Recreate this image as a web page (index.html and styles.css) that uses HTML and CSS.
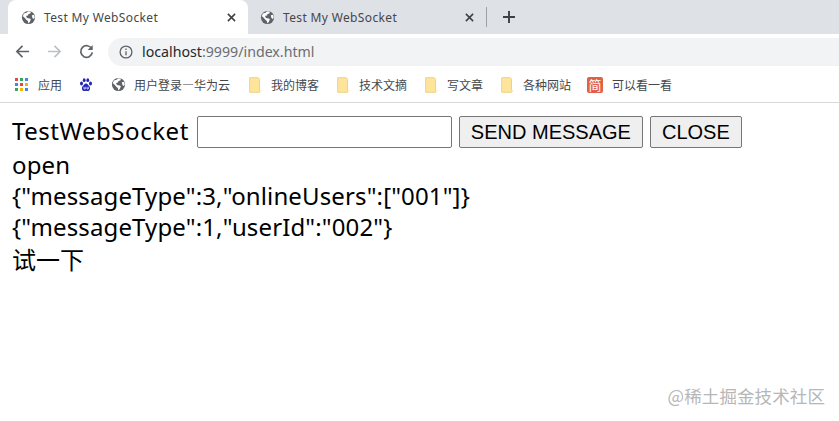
FILE: index.html
```html
<!DOCTYPE html>
<html lang="zh">
<head>
<meta charset="utf-8">
<title>Test My WebSocket</title>
<link rel="stylesheet" href="styles.css">
</head>
<body>
<svg class="defs" width="0" height="0" aria-hidden="true">
  <symbol id="globe" viewBox="0 0 16 16">
    <circle cx="8" cy="8" r="7" fill="#5f6368"/>
    <path d="M3 3.6 6 3l1.6-1.6 3 .4-.6 1.800-2 .6-.5 1.600-1.600.3-.4 1.400 1.600 1.200 2.500.3.9 1.200-1.200 2.500-1.400 1.600-.6-2.700-1.600-1.200L3.600 8 2 6.600z" fill="#fff"/>
    <path d="M11.500 5.600 14 5l.6 3-1.200 1.600-1.200-1.200z" fill="#fff"/>
  </symbol>
  <symbol id="folder" viewBox="0 0 12 16">
    <path d="M.7.7h8c1 0 1.800.8 1.800 1.800v10.300l.9 1-.9 1.500H.7z" fill="#fee59b" stroke="#ecd286"/>
  </symbol>
</svg>
<header class="chrome">
  <div class="tabstrip">
    <div class="tab tab-active">
      <svg class="fav"><use href="#globe"/></svg>
      <span class="tab-title">Test My WebSocket</span>
      <svg class="tab-x" viewBox="0 0 10 10"><path d="M1 1l8 8M9 1l-8 8"/></svg>
    </div>
    <div class="tab tab-idle">
      <svg class="fav"><use href="#globe"/></svg>
      <span class="tab-title">Test My WebSocket</span>
      <svg class="tab-x" viewBox="0 0 10 10"><path d="M1 1l8 8M9 1l-8 8"/></svg>
    </div>
    <span class="tab-sep"></span>
    <svg class="tab-new" viewBox="0 0 12 12"><path d="M6 0v12M0 6h12"/></svg>
  </div>
  <div class="toolbar">
    <svg class="nav" viewBox="0 0 16 16"><path d="M15 8H2M8 2 2 8l6 6"/></svg>
    <svg class="nav nav-off" viewBox="0 0 16 16"><path d="M1 8h13M8 2l6 6-6 6"/></svg>
    <svg class="nav" viewBox="0 0 16 16"><path d="M13.600 5.200A6.200 6.200 0 1 0 14.200 9"/><path class="fill" d="M14.600 1v5.400H9.200z"/></svg>
    <div class="omnibox">
      <svg class="info" viewBox="0 0 14 14"><circle cx="7" cy="7" r="5.900"/><path d="M7 6.200v4M7 3.600v1.500"/></svg>
      <span class="url"><span class="host">localhost</span>:9999/index.html</span>
    </div>
  </div>
  <div class="bookmarks">
    <div class="bm bm-apps">
      <span class="apps"><i class="r"></i><i class="g"></i><i class="b"></i><i class="b"></i><i class="r"></i><i class="y"></i><i class="g"></i><i class="y"></i><i class="b"></i></span>
      <span>应用</span>
    </div>
    <div class="bm bm-paw">
      <svg class="paw" viewBox="0 0 14 14"><g fill="#2125b8"><ellipse cx="2.500" cy="5.500" rx="1.500" ry="2"/><ellipse cx="5.200" cy="2.200" rx="1.400" ry="1.900"/><ellipse cx="8.800" cy="2.200" rx="1.400" ry="1.900"/><ellipse cx="11.500" cy="5.500" rx="1.500" ry="2"/><path d="M7 5.400c1.600 0 2 1.600 3.300 2.800 1.500 1.500.7 4.800-1.500 4.800-.8 0-1.200-.3-1.800-.3s-1 .3-1.800.3c-2.200 0-3-3.300-1.500-4.800C5 7 5.400 5.400 7 5.400z"/></g><path d="M5 8.800v2.200h1.300V8.800M8 8.800v2.200h1.300V8.800" fill="none" stroke="#fff" stroke-width=".7"/></svg>
    </div>
    <div class="bm bm-user">
      <svg class="fav"><use href="#globe"/></svg>
      <span>用户登录—华为云</span>
    </div>
    <div class="bm bm-f1"><svg class="folder"><use href="#folder"/></svg><span>我的博客</span></div>
    <div class="bm bm-f2"><svg class="folder"><use href="#folder"/></svg><span>技术文摘</span></div>
    <div class="bm bm-f3"><svg class="folder"><use href="#folder"/></svg><span>写文章</span></div>
    <div class="bm bm-f4"><svg class="folder"><use href="#folder"/></svg><span>各种网站</span></div>
    <div class="bm"><span class="jian">简</span><span>可以看一看</span></div>
  </div>
</header>
<main class="page">
  <div class="controls">
    <span class="heading">TestWebSocket</span>
    <input class="field" type="text">
    <button class="btn btn-send" type="button">SEND MESSAGE</button>
    <button class="btn btn-close" type="button">CLOSE</button>
  </div>
  <div class="log log-open">open</div>
  <div class="log">{"messageType":3,"onlineUsers":["001"]}</div>
  <div class="log">{"messageType":1,"userId":"002"}</div>
  <div class="log log-cjk">试一下</div>
</main>
<div class="mark">@稀土掘金技术社区</div>
</body>
</html>
```

FILE: styles.css
```css
* { box-sizing: border-box; }
html, body { margin: 0; height: 100%; }
body {
  background: #fff;
  overflow: hidden;
  font-family: "Noto Sans", "Noto Sans CJK SC", sans-serif;
  color: #000;
}
.defs { display: block; height: 0; }

.chrome { display: flex; flex-direction: column; }
.tabstrip {
  height: 34px;
  background: #dee1e6;
  display: flex;
  align-items: center;
  padding-left: 8px;
}
.tab {
  height: 34px;
  width: 240px;
  display: flex;
  align-items: center;
  padding-left: 13px;
  font: 12px "Noto Sans", "Noto Sans CJK SC", sans-serif;
  color: #45474b;
}
.tab-active { background: #fff; border-radius: 8px 8px 0 0; }
.tab-idle { padding-left: 12px; }
.fav { width: 15px; height: 15px; flex: none; }
.tab-title { margin-left: 8px; letter-spacing: .35px; width: 183px; white-space: nowrap; }
.tab-idle .tab-title { width: 182px; }
.tab-x { width: 9px; height: 9px; fill: none; stroke: #3c4043; stroke-width: 1.700; flex: none; }
.tab-sep { width: 1px; height: 20px; background: #9aa0a6; margin-left: -2px; }
.tab-new { width: 12px; height: 12px; margin-left: 16px; fill: none; stroke: #3c4043; stroke-width: 1.900; }

.toolbar {
  height: 35px;
  background: #fff;
  display: flex;
  align-items: center;
  padding-left: 15px;
}
.nav { width: 15px; height: 15px; flex: none; margin-right: 17px; fill: none; stroke: #5f6368; stroke-width: 1.800; }
.nav-off { stroke: #bdc1c6; }
.nav .fill { fill: #5f6368; stroke: none; }
.omnibox {
  flex: 1;
  height: 28px;
  margin-left: -3px;
  background: #f1f3f4;
  border-radius: 14px 0 0 14px;
  display: flex;
  align-items: center;
  padding-left: 11px;
}
.info { width: 14px; height: 14px; fill: none; stroke: #5f6368; stroke-width: 1.300; }
.url { margin-left: 9px; font-size: 14.200px; color: #6b6e72; white-space: nowrap; }
.host { color: #26282b; }

.bookmarks {
  height: 34px;
  background: #fff;
  border-bottom: 1px solid #d6d8da;
  display: flex;
  align-items: center;
  padding: 0 0 2px 15px;
  font: 12px "Noto Sans CJK SC", sans-serif;
  color: #45474b;
}
.bm { display: flex; align-items: center; white-space: nowrap; }
.bm-apps { width: 64px; gap: 10px; }
.apps { width: 13px; height: 13px; display: grid; grid-template-columns: repeat(3, 3px); gap: 2px; flex: none; }
.apps i { display: block; height: 3px; }
.apps .r { background: #e0493e; }
.apps .g { background: #3aa757; }
.apps .b { background: #4285f4; }
.apps .y { background: #f4b400; }
.bm-paw { width: 32px; }
.paw { width: 14px; height: 14px; }
.bm-user { width: 138px; gap: 8px; }
.folder { width: 12px; height: 16px; flex: none; }
.bm-f1, .bm-f2 { gap: 10px; width: 88px; }
.bm-f3 { gap: 10px; width: 76px; }
.bm-f4 { gap: 10px; width: 86px; }
.jian {
  width: 16px;
  height: 16px;
  background: #df6149;
  border-radius: 2px;
  color: #fff;
  font-size: 13px;
  line-height: 16px;
  text-align: center;
  margin-right: 9px;
}

.page { padding: 12px 12px 0; font-size: 24px; }
.controls { height: 33px; display: flex; align-items: center; white-space: nowrap; }
.heading { letter-spacing: .55px; margin-top: -2px; }
.field {
  width: 255px;
  height: 32px;
  margin: 1px 0 0 8px;
  border: 1px solid #767676;
  border-radius: 2px;
  background: #fff;
  font-size: 24px;
}
.btn {
  height: 32px;
  margin: 1px 0 0 7px;
  padding: 0;
  border: 1px solid #767676;
  border-radius: 2px;
  background: #efefef;
  color: #000;
  font: 20px "Liberation Sans", sans-serif;
}
.btn-send { width: 184px; }
.btn-close { width: 92px; }
.log { height: 31px; line-height: 31px; white-space: nowrap; letter-spacing: .13px; }
.log-open { margin-top: 1px; }
.log-cjk { margin-top: 1px; font-family: "Noto Sans CJK SC", sans-serif; letter-spacing: 0; }

.mark {
  position: absolute;
  right: 14px;
  top: 383px;
  font: 17.500px "Noto Sans CJK SC", sans-serif;
  color: #b7b7b7;
  letter-spacing: .1px;
}
```
